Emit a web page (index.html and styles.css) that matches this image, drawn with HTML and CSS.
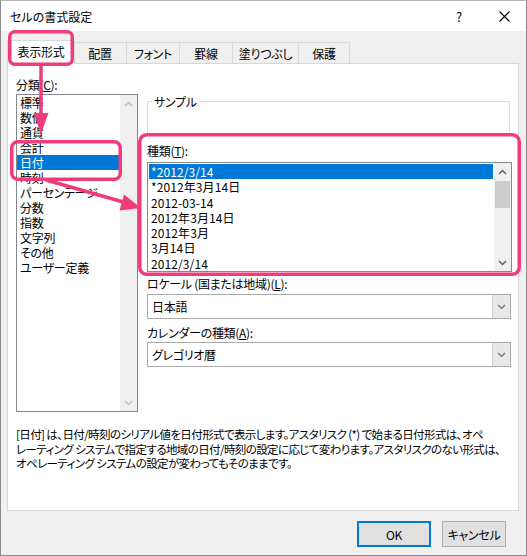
FILE: index.html
```html
<!DOCTYPE html>
<html lang="ja">
<head>
<meta charset="utf-8">
<title>セルの書式設定</title>
<link rel="stylesheet" href="styles.css">
</head>
<body>
<div class="screen">
  <div class="window">
    <div class="titlebar">
      <span class="title">セルの書式設定</span>
      <span class="help">?</span>
      <span class="close"><svg width="11" height="11" viewBox="0 0 11 11"><path d="M0.5 0.5L10.5 10.5M10.5 0.5L0.5 10.5" stroke="#000" stroke-width="1.1" fill="none"/></svg></span>
    </div>
    <div class="tabs">
      <div class="tab active">表示形式</div>
      <div class="tab w54">配置</div>
      <div class="tab w54">フォント</div>
      <div class="tab w54">罫線</div>
      <div class="tab w67">塗りつぶし</div>
      <div class="tab w52">保護</div>
    </div>
    <div class="panel">
      <div class="left">
        <div class="label">分類(<u>C</u>):</div>
        <div class="listbox cat">
          <ul class="items">
            <li>標準</li>
            <li>数値</li>
            <li>通貨</li>
            <li>会計</li>
            <li class="sel">日付</li>
            <li>時刻</li>
            <li>パーセンテージ</li>
            <li>分数</li>
            <li>指数</li>
            <li>文字列</li>
            <li>その他</li>
            <li>ユーザー定義</li>
          </ul>
          <div class="vscroll">
            <span class="arrow"><svg width="9" height="6" viewBox="0 0 9 6"><polyline points="1,5 4.5,1.5 8,5" fill="none" stroke="#c4c4c4" stroke-width="1.5"/></svg></span>
            <span class="arrow"><svg width="9" height="6" viewBox="0 0 9 6"><polyline points="1,1 4.5,4.5 8,1" fill="none" stroke="#c4c4c4" stroke-width="1.5"/></svg></span>
          </div>
        </div>
      </div>
      <div class="right">
        <div class="sample"><span class="sample-label">サンプル</span></div>
        <div class="label gap6">種類(<u>T</u>):</div>
        <div class="listbox types">
          <ul class="items">
            <li class="sel">*2012/3/14</li>
            <li>*2012年3月14日</li>
            <li>2012-03-14</li>
            <li>2012年3月14日</li>
            <li>2012年3月</li>
            <li>3月14日</li>
            <li>2012/3/14</li>
          </ul>
          <div class="vscroll">
            <span class="arrow"><svg width="9" height="6" viewBox="0 0 9 6"><polyline points="1,5 4.5,1.5 8,5" fill="none" stroke="#606060" stroke-width="1.5"/></svg></span>
            <span class="thumb"></span>
            <span class="spacer"></span>
            <span class="arrow"><svg width="9" height="6" viewBox="0 0 9 6"><polyline points="1,1 4.5,4.5 8,1" fill="none" stroke="#606060" stroke-width="1.5"/></svg></span>
          </div>
        </div>
        <div class="label gap4">ロケール (国または地域)(<u>L</u>):</div>
        <div class="combo gap3">
          <span class="combo-text">日本語</span>
          <span class="drop"><svg width="9" height="6" viewBox="0 0 9 6"><polyline points="1,1 4.5,4.5 8,1" fill="none" stroke="#6a6a6a" stroke-width="1.1"/></svg></span>
        </div>
        <div class="label gap6">カレンダーの種類(<u>A</u>):</div>
        <div class="combo gap2">
          <span class="combo-text">グレゴリオ暦</span>
          <span class="drop"><svg width="9" height="6" viewBox="0 0 9 6"><polyline points="1,1 4.5,4.5 8,1" fill="none" stroke="#6a6a6a" stroke-width="1.1"/></svg></span>
        </div>
      </div>
      <p class="desc">[日付] は、日付/時刻のシリアル値を日付形式で表示します。アスタリスク (*) で始まる日付形式は、オペ<br>レーティング システムで指定する地域の日付/時刻の設定に応じて変わります。アスタリスクのない形式は、<br>オペレーティング システムの設定が変わってもそのままです。</p>
    </div>
    <div class="buttons">
      <button class="btn default">OK</button>
      <button class="btn cancel">キャンセル</button>
    </div>
  </div>
  <svg class="annot" width="527" height="556" viewBox="0 0 527 556">
    <g fill="none" stroke="#f03c7a" stroke-width="3.5" stroke-linejoin="round">
      <rect x="9.75" y="31.75" width="62.5" height="32.5" rx="5"/>
      <line x1="41" y1="66" x2="41" y2="118"/>
      <rect x="11.75" y="141.75" width="108.5" height="37.5" rx="6"/>
      <line x1="46" y1="180" x2="125" y2="202.5"/>
      <rect x="139.75" y="134.75" width="379.5" height="139.5" rx="7"/>
    </g>
    <g fill="#f03c7a">
      <polygon points="33.5,113 48.5,113 41,134"/>
      <polygon points="141,208 124,194.5 119.5,210.5"/>
    </g>
  </svg>
</div>
</body>
</html>
```

FILE: styles.css
```css
body {
  margin: 0;
  background: #fff;
  font-family: "Noto Sans CJK JP", "Noto Sans", sans-serif;
  font-size: 12px;
  font-feature-settings: "palt";
  letter-spacing: -0.3px;
  color: #000;
}

.screen {
  position: relative;
  width: 527px;
  height: 556px;
}

.window {
  width: 527px;
  height: 556px;
  box-sizing: border-box;
  border: 1px solid #8a8a8a;
  border-top-color: #b4b4b4;
  background: #f0f0f0;
  display: flex;
  flex-direction: column;
}

.titlebar {
  height: 30px;
  flex: none;
  background: #fff;
  display: flex;
  align-items: center;
  padding: 0 12px 0 9px;
  line-height: 15px;
}

.title {
  flex: 1;
  letter-spacing: 0;
}

.help {
  width: 20px;
  text-align: center;
  margin-right: 25px;
  font-size: 13px;
}

.close {
  width: 20px;
  height: 11px;
  display: flex;
  justify-content: center;
}

.tabs {
  display: flex;
  align-items: flex-end;
  height: 23px;
  margin-top: 9px;
  padding-left: 6px;
  position: relative;
  z-index: 2;
  flex: none;
}

.tab {
  height: 21px;
  box-sizing: border-box;
  border: 1px solid #d9d9d9;
  border-bottom: none;
  margin-left: -1px;
  background: #f0f0f0;
  display: flex;
  align-items: center;
  justify-content: center;
  line-height: 15px;
  padding-top: 1px;
}

.tab.active {
  width: 68px;
  height: 24px;
  margin-left: 0;
  margin-right: -1px;
  margin-bottom: -1px;
  background: #fff;
  padding: 0 0 2px 0;
  position: relative;
  z-index: 3;
}

.w54 { width: 54px; }
.w67 { width: 67px; }
.w52 { width: 52px; }

.panel {
  margin-left: 6px;
  width: 512px;
  height: 448px;
  flex: none;
  box-sizing: border-box;
  border: 1px solid #d9d9d9;
  background: #fff;
  padding: 13px 0 0 8px;
  display: grid;
  grid-template-columns: 122px 365px;
  grid-template-rows: auto auto;
  column-gap: 9px;
  align-content: start;
}

.label {
  line-height: 15px;
  height: 15px;
  white-space: nowrap;
}

.gap6 { margin-top: 6px; }
.gap4 { margin-top: 4px; }
.gap3 { margin-top: 3px; }
.gap2 { margin-top: 2px; }

.listbox {
  box-sizing: border-box;
  border: 1px solid #828790;
  background: #fff;
  display: flex;
}

.items {
  list-style: none;
  margin: 0;
  padding: 0;
  flex: 1;
}

.items li {
  white-space: nowrap;
}

.items li.sel {
  background: #0078d7;
  color: #fff;
}

.cat {
  width: 122px;
  height: 318px;
  margin-top: 2px;
}

.cat .items li {
  height: 15px;
  line-height: 15px;
  padding-left: 3px;
}

.vscroll {
  width: 17px;
  flex: none;
  background: #f0f0f0;
  display: flex;
  flex-direction: column;
  justify-content: space-between;
  align-items: center;
}

.arrow {
  height: 17px;
  width: 17px;
  display: flex;
  align-items: center;
  justify-content: center;
}

.right {
  display: flex;
  flex-direction: column;
}

.sample {
  margin-top: 24px;
  height: 36px;
  box-sizing: border-box;
  border: 1px solid #dcdcdc;
  border-bottom: none;
  width: 363px;
}

.sample-label {
  display: inline-block;
  margin: -8px 0 0 4px;
  padding: 0 2px;
  background: #fff;
  line-height: 15px;
  vertical-align: top;
}

.types {
  width: 365px;
  height: 110px;
  margin-top: 4px;
  padding: 1px 0 0 1px;
}

.types .items {
  margin-right: 1px;
}

.types .items li {
  height: 15.3px;
  line-height: 15.3px;
  padding-left: 2px;
  letter-spacing: 0.1px;
}

.types .vscroll {
  justify-content: flex-start;
  margin-top: -1px;
}

.types .vscroll .thumb {
  width: 15px;
  height: 27px;
  margin-top: 1px;
  background: #cdcdcd;
  flex: none;
}

.types .vscroll .spacer {
  flex: 1;
}

.combo {
  width: 364px;
  height: 25px;
  box-sizing: border-box;
  border: 1px solid #a9a9a9;
  background: #fff;
  display: flex;
}

.combo-text {
  flex: 1;
  line-height: 23px;
  padding-left: 4px;
}

.drop {
  width: 17px;
  background: #e8e8e8;
  border-left: 1px solid #cfcfcf;
  display: flex;
  align-items: center;
  justify-content: center;
}

.desc {
  grid-column: 1 / -1;
  margin: 15px 0 0 0;
  font-size: 11.5px;
  letter-spacing: -0.6px;
  line-height: 14.5px;
  white-space: nowrap;
}

.buttons {
  display: flex;
  justify-content: flex-end;
  gap: 11px;
  padding: 10px 20px 0 0;
}

.btn {
  height: 26px;
  box-sizing: border-box;
  background: #e1e1e1;
  border: 1px solid #adadad;
  font-family: "Noto Sans CJK JP", "Noto Sans", sans-serif;
  font-size: 12px;
  font-feature-settings: "palt";
  letter-spacing: -0.3px;
  color: #000;
  padding: 0;
  margin: 0;
}

.btn.default {
  width: 74px;
  border: 2px solid #0078d7;
}

.btn.cancel {
  width: 64px;
}

.annot {
  position: absolute;
  left: 0;
  top: 0;
  z-index: 10;
  pointer-events: none;
}
```
